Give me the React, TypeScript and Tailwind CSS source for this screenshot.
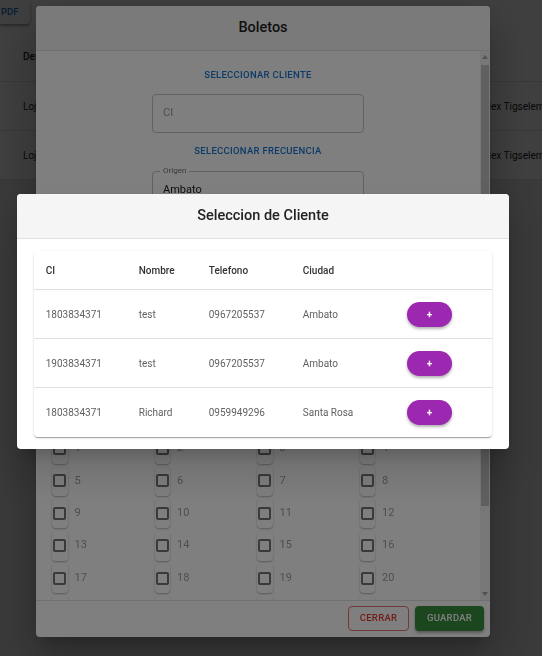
import React from "react"

const clientes = [
  { ci: "1803834371", nombre: "test", telefono: "0967205537", ciudad: "Ambato" },
  { ci: "1903834371", nombre: "test", telefono: "0967205537", ciudad: "Ambato" },
  { ci: "1803834371", nombre: "Richard", telefono: "0959949296", ciudad: "Santa Rosa" },
]

const asientos = Array.from({ length: 24 }, (_, i) => i + 1)

function Outlined({ label, value, placeholder }: { label?: string; value?: string; placeholder?: string }) {
  return (
    <div className="relative w-[212px] h-[39px] border border-[#c4c4c4] rounded-[4px] flex items-center px-[10px] shrink-0">
      {label && (
        <span className="absolute -top-[6px] left-[7px] bg-white px-[3px] text-[8px] leading-[10px] text-[#757575]">
          {label}
        </span>
      )}
      {value ? (
        <span className="text-[11px] text-[#222]">{value}</span>
      ) : (
        <span className="text-[11px] text-[#9e9e9e]">{placeholder}</span>
      )}
    </div>
  )
}

function TextButton({ children }: { children: React.ReactNode }) {
  return (
    <div className="h-[25px] flex items-center justify-center px-2 text-[9.5px] font-medium tracking-[0.03em] text-[#1976d2] shrink-0">
      {children}
    </div>
  )
}

function Arrow({ up }: { up?: boolean }) {
  return (
    <div className="h-[12px] flex items-center justify-center">
      <svg width="6" height="4" viewBox="0 0 6 4">
        <path d={up ? "M0 4 L3 0 L6 4 Z" : "M0 0 L3 4 L6 0 Z"} fill="#a3a3a3" />
      </svg>
    </div>
  )
}

export default function App() {
  return (
    <div className="relative w-[542px] h-[656px] overflow-hidden bg-[#e8e8e8] font-[Roboto,sans-serif]">
      {/* page underneath */}
      <div className="h-[32px] bg-white shadow-[0_2px_4px_rgba(0,0,0,0.2)]">
        <div className="w-[30px] h-[24px] bg-white rounded-br-[4px] shadow-[0_2px_3px_rgba(0,0,0,0.35)] flex items-center pl-[1px] text-[9.5px] font-medium text-[#1976d2]">
          PDF
        </div>
      </div>
      <div className="bg-white text-[10px] text-[#222] whitespace-nowrap">
        <div className="h-[50px] flex items-center pl-[23px] border-b border-[#e0e0e0] font-medium">Destino</div>
        <div className="h-[49px] flex items-center border-b border-[#e0e0e0]">
          <span className="pl-[23px] w-[482px] shrink-0">Loja</span>
          <span>Alex Tigselema</span>
        </div>
        <div className="h-[49px] flex items-center border-b border-[#e0e0e0]">
          <span className="pl-[23px] w-[482px] shrink-0">Loja</span>
          <span>Alex Tigselema</span>
        </div>
      </div>

      {/* first backdrop */}
      <div className="fixed inset-0 bg-black/50" />

      {/* Boletos dialog */}
      <div className="fixed inset-x-0 top-0 h-[642px] pr-[16px] flex items-center justify-center">
        <div className="w-[454px] h-[631px] bg-white rounded-[4px] shadow-[0_11px_15px_-7px_rgba(0,0,0,0.2),0_24px_38px_3px_rgba(0,0,0,0.14),0_9px_46px_8px_rgba(0,0,0,0.12)] flex flex-col overflow-hidden">
          <div className="h-[45px] shrink-0 bg-[#f5f5f5] border-b border-[#e0e0e0] flex items-center justify-center pt-[1px] text-[14.5px] font-medium text-[#222]">
            Boletos
          </div>
          <div className="h-[549px] shrink-0 flex overflow-hidden">
            <div className="flex-1 flex flex-col items-center pt-[12px]">
              <TextButton>SELECCIONAR CLIENTE</TextButton>
              <div className="mt-[6px]">
                <Outlined placeholder="CI" />
              </div>
              <div className="mt-[6px]">
                <TextButton>SELECCIONAR FRECUENCIA</TextButton>
              </div>
              <div className="mt-[7px] flex flex-col gap-[7px]">
                <Outlined label="Origen" value="Ambato" />
                <Outlined label="Destino" value="Loja" />
                <Outlined label="Fecha" value="2021-07-20" />
                <Outlined label="Hora" value="08:00" />
              </div>
              <div className="h-[86px] shrink-0 flex items-center text-[9.5px] font-medium tracking-[0.03em] text-[#1976d2]">
                SELECCIONAR ASIENTOS
              </div>
              <div className="w-full pl-[16px] pr-[18px] grid grid-cols-4 gap-y-[2.4px]">
                {asientos.map((n) => (
                  <div key={n} className="h-[30px] flex items-center">
                    <div className="w-[15.5px] h-[30px] bg-white rounded-[4px] shadow-[0_1px_2px_rgba(0,0,0,0.3)] flex items-center justify-center">
                      <div className="w-[13px] h-[13px] border-2 border-[#757575] rounded-[2px]" />
                    </div>
                    <span className="ml-[7px] text-[11px] text-[#9e9e9e]">{n}</span>
                  </div>
                ))}
              </div>
            </div>
            <div className="w-[10px] shrink-0 bg-[#f1f1f1] flex flex-col">
              <Arrow up />
              <div className="mt-[2px] h-[441px] mx-[1px] bg-[#c1c1c1]" />
              <div className="flex-1" />
              <Arrow />
            </div>
          </div>
          <div className="flex-1 border-t border-[#e0e0e0] flex items-center justify-end gap-[6px] pr-[6px]">
            <div className="w-[61px] h-[25.5px] border border-[#e57373] rounded-[4px] flex items-center justify-center text-[9.5px] font-medium tracking-[0.03em] text-[#e53935]">
              CERRAR
            </div>
            <div className="w-[69px] h-[25.5px] bg-[#388e3c] rounded-[4px] shadow-[0_2px_3px_rgba(0,0,0,0.3)] flex items-center justify-center text-[9.5px] font-medium tracking-[0.03em] text-white">
              GUARDAR
            </div>
          </div>
        </div>
      </div>

      {/* second backdrop */}
      <div className="fixed inset-0 bg-black/50" />

      {/* Seleccion de Cliente dialog */}
      <div className="fixed inset-x-0 top-0 h-[642px] pr-[16px] flex items-center justify-center">
        <div className="w-[491.5px] h-[255px] bg-white rounded-[4px] shadow-[0_11px_15px_-7px_rgba(0,0,0,0.2),0_24px_38px_3px_rgba(0,0,0,0.14)] flex flex-col overflow-hidden">
          <div className="h-[45px] shrink-0 bg-[#f5f5f5] border-b border-[#e0e0e0] flex items-center justify-center pt-[1px] text-[14.5px] font-medium text-[#222]">
            Seleccion de Cliente
          </div>
          <div className="px-[17px] pt-[12.7px]">
            <div className="bg-white rounded-[4px] shadow-[0_2px_1px_-1px_rgba(0,0,0,0.2),0_1px_1px_0_rgba(0,0,0,0.14),0_1px_3px_0_rgba(0,0,0,0.12)] text-[10px]">
              <div className="h-[39px] grid grid-cols-[93px_70px_94px_104px_1fr] items-center border-b border-[#e0e0e0] font-medium text-[#333]">
                <span className="pl-[11.5px]">CI</span>
                <span className="pl-[11.5px]">Nombre</span>
                <span className="pl-[11.5px]">Telefono</span>
                <span className="pl-[11.5px]">Ciudad</span>
                <span />
              </div>
              {clientes.map((c, i) => (
                <div
                  key={i}
                  className={`h-[49px] grid grid-cols-[93px_70px_94px_104px_1fr] items-center text-[#616161] ${
                    i < clientes.length - 1 ? "border-b border-[#e0e0e0]" : ""
                  }`}
                >
                  <span className="pl-[11.5px]">{c.ci}</span>
                  <span className="pl-[11.5px]">{c.nombre}</span>
                  <span className="pl-[11.5px]">{c.telefono}</span>
                  <span className="pl-[11.5px]">{c.ciudad}</span>
                  <div className="pl-[11.5px]">
                    <div className="w-[45.5px] h-[25px] rounded-full bg-[#9c27b0] shadow-[0_2px_3px_rgba(0,0,0,0.3)] flex items-center justify-center text-[10px] font-bold text-white">
                      +
                    </div>
                  </div>
                </div>
              ))}
            </div>
          </div>
        </div>
      </div>
    </div>
  )
}
